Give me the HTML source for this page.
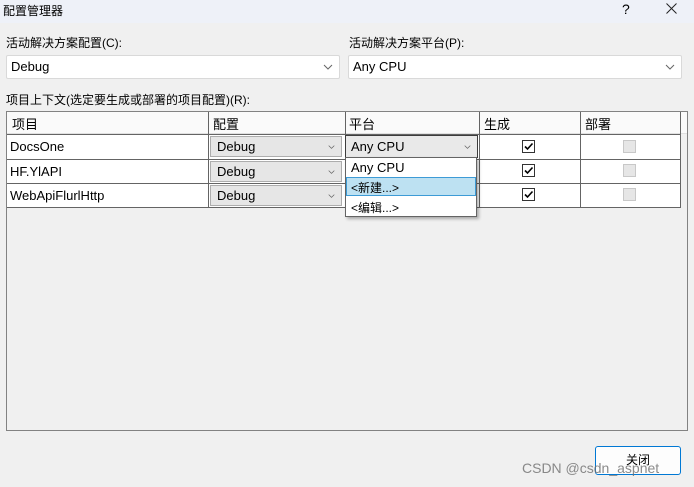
<!DOCTYPE html><html><head><style>
*{box-sizing:border-box}body{margin:0;width:694px;height:487px;background:#f0f0f0;font-family:"Liberation Sans","Noto Sans CJK SC",sans-serif;font-size:12px;color:#000;position:relative;overflow:hidden}
.a{position:absolute}
.sel{position:absolute;background:#fff;border:1px solid #d9d9d9;border-radius:2px;height:24px;line-height:22px;padding-left:4px;font-size:13px}
.chev{position:absolute;right:6px;top:8px;width:10px;height:6px}
.cell{position:absolute;font-size:13px}
.dd{position:absolute;background:#e6e6e6;border:1px solid #adadad;height:21px;line-height:19px;padding-left:6px;font-size:13px}
.cb{position:absolute;width:13px;height:13px;border:1px solid #333;background:#fff}
.cbd{position:absolute;width:13px;height:13px;border:1px solid #c8c8c8;background:#e6e6e6}
</style></head><body>
<div class="a" style="left:0;top:0;width:694px;height:23px;background:#eef1f8"></div>
<div class="a" style="left:3px;top:2px;font-size:12px">配置管理器</div>
<div class="a" style="left:622px;top:1px;font-size:14px">?</div>
<svg class="a" style="left:666px;top:3px" width="11" height="11"><path d="M0.5 0.5L10.5 10.5M10.5 0.5L0.5 10.5" stroke="#222" stroke-width="1"/></svg>
<div class="a" style="left:6px;top:34px">活动解决方案配置(C):</div>
<div class="a" style="left:349px;top:34px">活动解决方案平台(P):</div>
<div class="sel" style="left:6px;top:55px;width:334px">Debug<svg class="chev" viewBox="0 0 10 6"><path d="M1 1L5 5L9 1" stroke="#666" fill="none"/></svg></div>
<div class="sel" style="left:348px;top:55px;width:334px">Any CPU<svg class="chev" viewBox="0 0 10 6"><path d="M1 1L5 5L9 1" stroke="#666" fill="none"/></svg></div>
<div class="a" style="left:6px;top:91px">项目上下文(选定要生成或部署的项目配置)(R):</div>
<div class="a" style="left:6px;top:111px;width:682px;height:320px;background:#f0f0f0;border:1px solid #828282"></div>
<div class="a" style="left:7px;top:112px;width:680px;height:22px;background:#fafafa;border-bottom:1px solid #e0e0e0"></div>
<div class="a" style="left:7px;top:134px;width:673px;height:73px;background:#fff"></div>
<div class="a" style="left:7px;top:159px;width:673px;height:1px;background:#646464"></div>
<div class="a" style="left:7px;top:183px;width:673px;height:1px;background:#646464"></div>
<div class="a" style="left:7px;top:207px;width:673px;height:1px;background:#646464"></div>
<div class="a" style="left:7px;top:134px;width:673px;height:1px;background:#646464"></div>
<div class="a" style="left:208px;top:112px;width:1px;height:96px;background:#646464"></div>
<div class="a" style="left:345px;top:112px;width:1px;height:96px;background:#646464"></div>
<div class="a" style="left:479px;top:112px;width:1px;height:96px;background:#646464"></div>
<div class="a" style="left:580px;top:112px;width:1px;height:96px;background:#646464"></div>
<div class="a" style="left:680px;top:112px;width:1px;height:96px;background:#646464"></div>
<div class="cell" style="left:12px;top:114px">项目</div>
<div class="cell" style="left:213px;top:114px">配置</div>
<div class="cell" style="left:349px;top:114px">平台</div>
<div class="cell" style="left:484px;top:114px">生成</div>
<div class="cell" style="left:585px;top:114px">部署</div>
<div class="cell" style="left:10px;top:139px">DocsOne</div>
<div class="cell" style="left:10px;top:164px">HF.YlAPI</div>
<div class="cell" style="left:10px;top:188px">WebApiFlurlHttp</div>
<div class="dd" style="left:210px;top:136px;width:132px">Debug<svg class="chev" viewBox="0 0 10 6" style="width:7px;top:7px"><path d="M1 1L5 5L9 1" stroke="#666" fill="none"/></svg></div>
<div class="dd" style="left:210px;top:161px;width:132px">Debug<svg class="chev" viewBox="0 0 10 6" style="width:7px;top:7px"><path d="M1 1L5 5L9 1" stroke="#666" fill="none"/></svg></div>
<div class="dd" style="left:210px;top:185px;width:132px">Debug<svg class="chev" viewBox="0 0 10 6" style="width:7px;top:7px"><path d="M1 1L5 5L9 1" stroke="#666" fill="none"/></svg></div>
<div class="dd" style="left:345px;top:135px;width:133px;height:23px;border:1px solid #3c3c3c;line-height:21px;padding-left:5px;background:#e9e9e9">Any CPU<svg class="chev" viewBox="0 0 10 6" style="width:7px;top:8px"><path d="M1 1L5 5L9 1" stroke="#666" fill="none"/></svg></div>
<div class="a" style="left:345px;top:157px;width:132px;height:60px;background:#fff;border:1px solid #646464;box-shadow:2px 2px 3px rgba(0,0,0,.3)"></div>
<div class="cell" style="left:351px;top:160px">Any CPU</div>
<div class="a" style="left:346px;top:177px;width:130px;height:19px;background:#bde1f2;border:1px solid #3d9bd6"></div>
<div class="cell" style="left:351px;top:179px;font-size:12px">&lt;新建...&gt;</div>
<div class="cell" style="left:351px;top:199px;font-size:12px">&lt;编辑...&gt;</div>
<div class="cb" style="left:522px;top:140px"></div><div class="cb" style="left:522px;top:164px"></div><div class="cb" style="left:522px;top:188px"></div>
<svg class="a" style="left:522px;top:140px" width="13" height="62"><g stroke="#000" stroke-width="1.6" fill="none"><path d="M3 6.5L5.5 9L10.5 3.5"/><path d="M3 30.5L5.5 33L10.5 27.5"/><path d="M3 54.5L5.5 57L10.5 51.5"/></g></svg>
<div class="cbd" style="left:623px;top:140px"></div><div class="cbd" style="left:623px;top:164px"></div><div class="cbd" style="left:623px;top:188px"></div>
<div class="a" style="left:595px;top:446px;width:86px;height:29px;background:#fdfdfd;border:1px solid #0078d4;border-radius:3px;text-align:center;line-height:27px;font-size:12px">关闭</div>
<div class="a" style="left:522px;top:460px;font-size:14px;color:rgba(110,110,110,.8)">CSDN @csdn_aspnet</div>
</body></html>
